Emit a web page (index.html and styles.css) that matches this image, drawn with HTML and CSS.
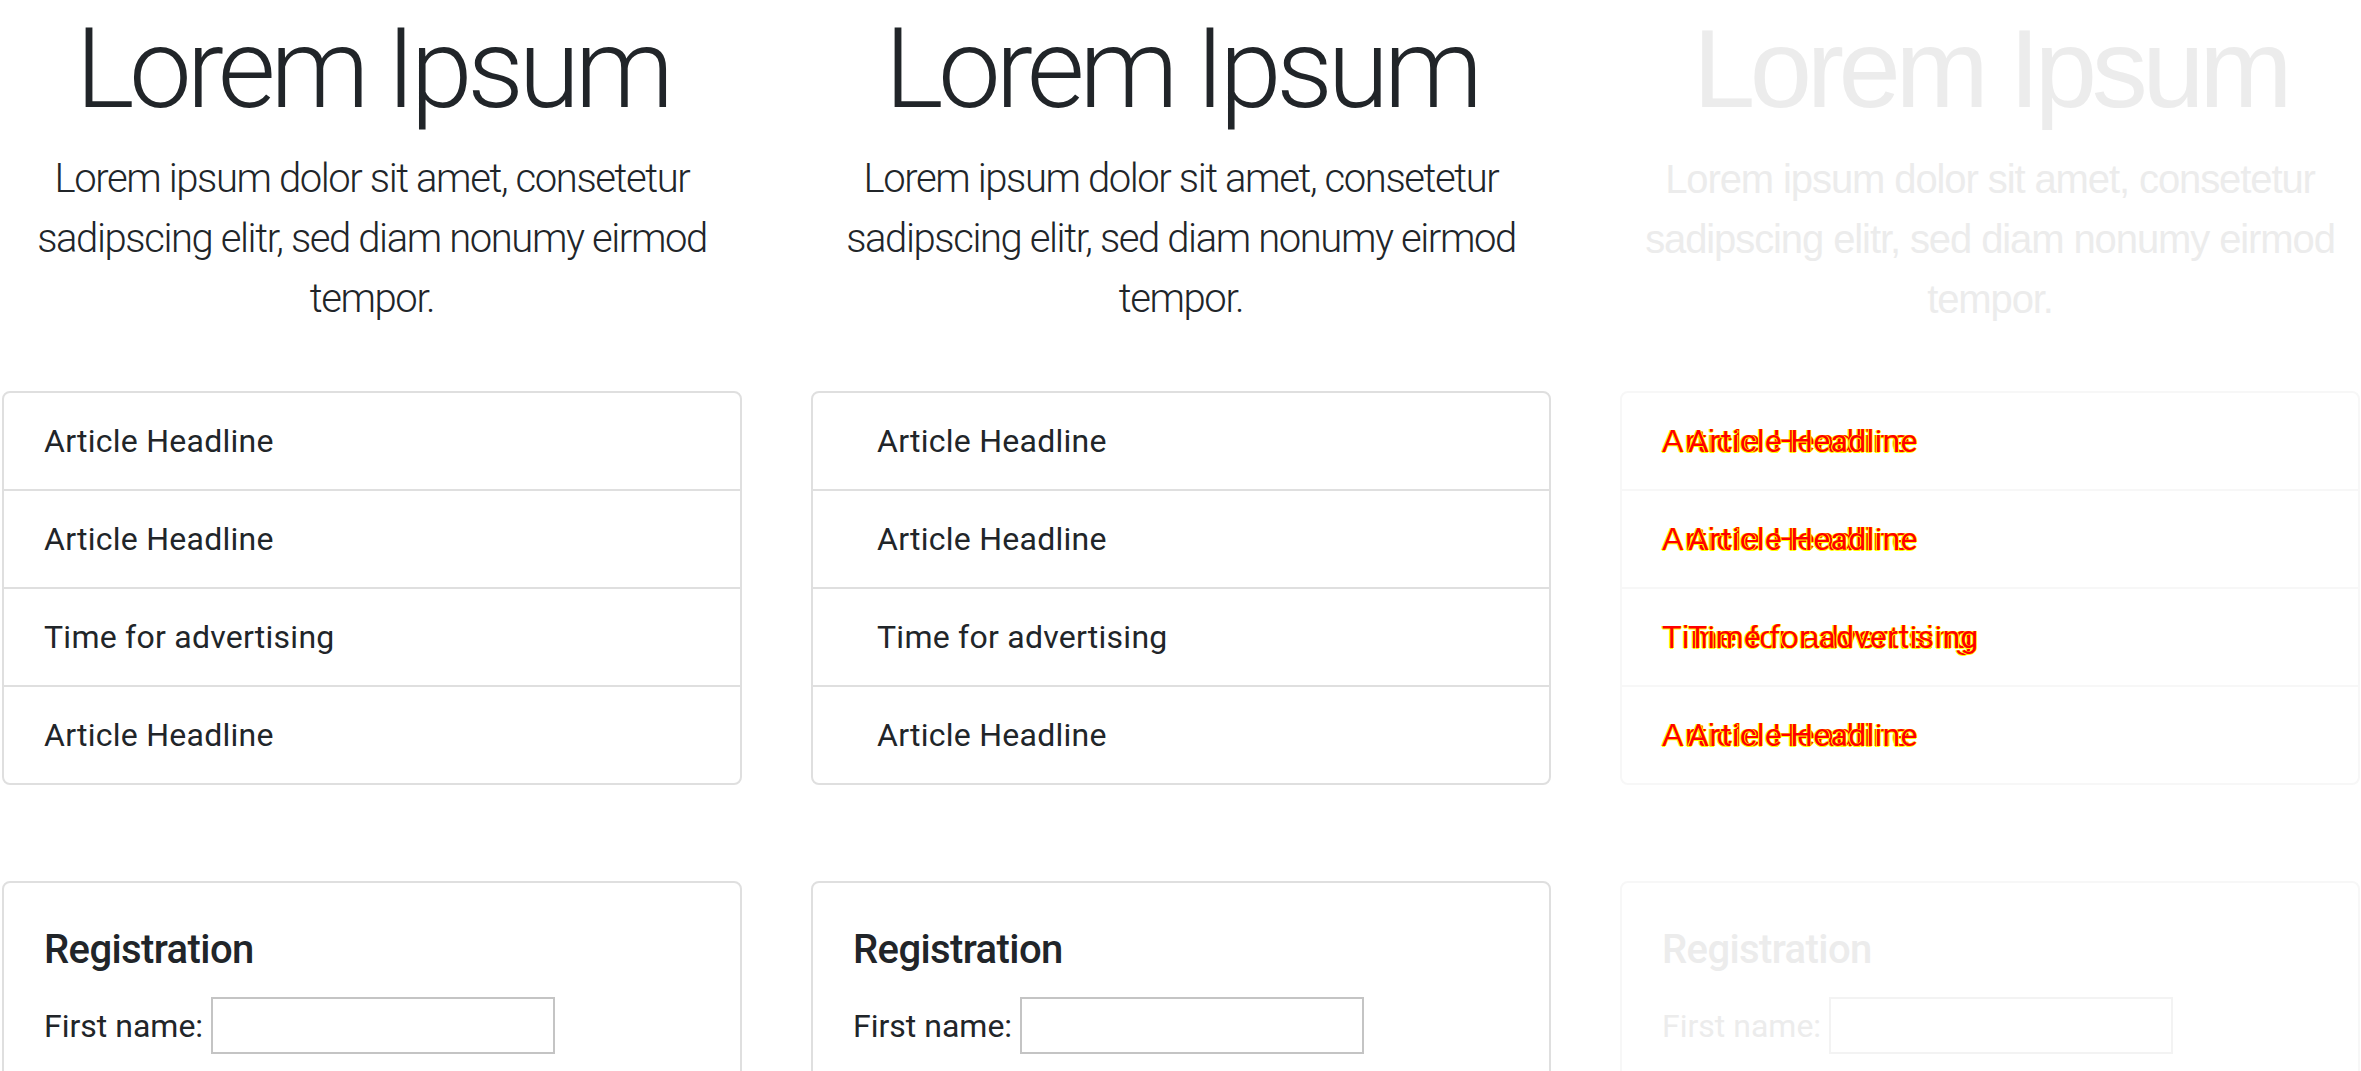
FILE: index.html
```html
<!DOCTYPE html>
<html lang="en">
<head>
<meta charset="utf-8">
<title>Lorem Ipsum – comparison</title>
<link rel="stylesheet" href="styles.css">
</head>
<body>
<main class="panels">
  <section class="panel">
    <h1 class="display">Lorem Ipsum</h1>
    <p class="lead">Lorem ipsum dolor sit amet, consetetur<br>sadipscing elitr, sed diam nonumy eirmod<br>tempor.</p>
    <ul class="list-group">
      <li class="list-item">Article Headline</li>
      <li class="list-item">Article Headline</li>
      <li class="list-item">Time for advertising</li>
      <li class="list-item">Article Headline</li>
    </ul>
    <form class="card">
      <h5 class="card-title">Registration</h5>
      <div class="field"><label class="field-label">First name:</label><input class="field-input" type="text"></div>
      <div class="field"><label class="field-label">Last name:</label><input class="field-input" type="text"></div>
    </form>
  </section>

  <section class="panel panel-actual">
    <h1 class="display">Lorem Ipsum</h1>
    <p class="lead">Lorem ipsum dolor sit amet, consetetur<br>sadipscing elitr, sed diam nonumy eirmod<br>tempor.</p>
    <ul class="list-group">
      <li class="list-item">Article Headline</li>
      <li class="list-item">Article Headline</li>
      <li class="list-item">Time for advertising</li>
      <li class="list-item">Article Headline</li>
    </ul>
    <form class="card">
      <h5 class="card-title">Registration</h5>
      <div class="field"><label class="field-label">First name:</label><input class="field-input" type="text"></div>
      <div class="field"><label class="field-label">Last name:</label><input class="field-input" type="text"></div>
    </form>
  </section>

  <section class="panel panel-diff">
    <h1 class="display">Lorem Ipsum</h1>
    <p class="lead">Lorem ipsum dolor sit amet, consetetur<br>sadipscing elitr, sed diam nonumy eirmod<br>tempor.</p>
    <ul class="list-group">
      <li class="list-item"><span class="diff-b">Article Headline</span><span class="diff-a">Article Headline</span></li>
      <li class="list-item"><span class="diff-b">Article Headline</span><span class="diff-a">Article Headline</span></li>
      <li class="list-item"><span class="diff-b">Time for advertising</span><span class="diff-a">Time for advertising</span></li>
      <li class="list-item"><span class="diff-b">Article Headline</span><span class="diff-a">Article Headline</span></li>
    </ul>
    <form class="card">
      <h5 class="card-title">Registration</h5>
      <div class="field"><label class="field-label">First name:</label><input class="field-input" type="text"></div>
      <div class="field"><label class="field-label">Last name:</label><input class="field-input" type="text"></div>
    </form>
  </section>
</main>
</body>
</html>
```

FILE: styles.css
```css
html, body {
  margin: 0;
  padding: 0;
  background: #fff;
  height: 100%;
  overflow: hidden;
}

body {
  font-family: Roboto, "Liberation Sans", Arial, sans-serif;
  font-size: 32px;
  line-height: 1.5;
  color: #212529;
}

.panels {
  display: grid;
  grid-template-columns: repeat(3, 740px);
  column-gap: 69px;
  padding: 2px 0 0 2px;
  align-items: start;
}

.panel {
  display: flex;
  flex-direction: column;
}

.display {
  margin: 0;
  font-size: 112px;
  font-weight: 300;
  line-height: 1.2;
  letter-spacing: -5.4px;
  text-align: center;
}

.lead {
  margin: 13px 0 0;
  font-size: 40px;
  font-weight: 300;
  line-height: 60px;
  letter-spacing: -1.4px;
  text-align: center;
}

.list-group {
  list-style: none;
  margin: 62px 0 0;
  padding: 0;
  border: 2px solid #dfdfdf;
  border-radius: 8px;
}

.list-item {
  position: relative;
  padding: 24px 40px;
  line-height: 48px;
  letter-spacing: 0.25px;
  border-top: 2px solid #dfdfdf;
}

.list-item:first-child {
  border-top: 0;
}

.panel-actual .list-item {
  padding-left: 64px;
}

.card {
  margin-top: 96px;
  border: 2px solid #dfdfdf;
  border-radius: 8px;
  padding: 43px 40px 40px;
}

.card-title {
  margin: 0 0 23px;
  font-size: 40px;
  font-weight: 500;
  line-height: 48px;
  letter-spacing: -0.6px;
}

.field {
  display: flex;
  align-items: center;
  gap: 8px;
  margin-bottom: 24px;
}

.field-label {
  line-height: 48px;
}

.field-input {
  box-sizing: border-box;
  width: 344px;
  height: 57px;
  margin: 0;
  border: 2px solid #c4c4c4;
  background: #fff;
  font: inherit;
}

/* diff panel */
.panel-diff {
  color: #ececec;
}

.panel-diff .display,
.panel-diff .lead {
  font-family: "Liberation Sans", Arial, sans-serif;
  font-weight: 400;
}

.panel-diff .lead {
  letter-spacing: -1.1px;
}

.panel-diff .list-group,
.panel-diff .card {
  border-color: #f7f7f7;
}

.panel-diff .list-item {
  border-top-color: #f7f7f7;
}

.panel-diff .list-item:first-child {
  border-top: 0;
}

.panel-diff .field-input {
  border-color: #f3f3f3;
}

.diff-a {
  position: absolute;
  left: 66px;
  top: 24px;
  color: #ff0000;
  text-shadow: 1px 0 #ffff00, -1px 0 #ffff00, 0 1px #ffff00;
}

.diff-b {
  color: #ff0000;
  font-family: "Liberation Sans", Arial, sans-serif;
  letter-spacing: 1.6px;
  text-shadow: 1px 0 #ffff00, -1px 0 #ffff00, 0 1px #ffff00;
}
```
